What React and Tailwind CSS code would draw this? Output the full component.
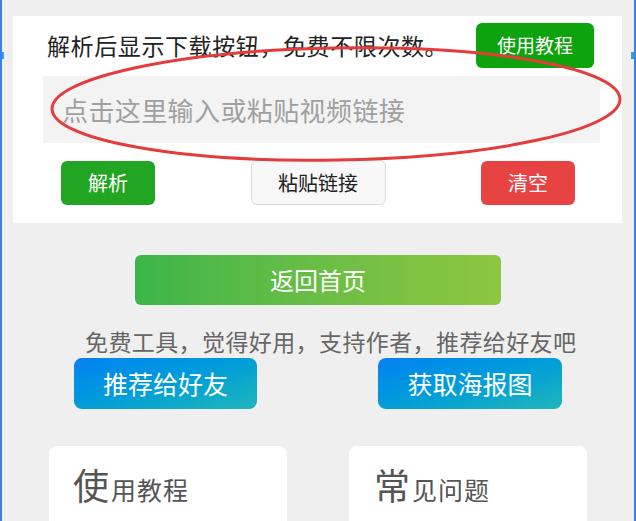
export default function App() {
  const font = { fontFamily: '"Noto Sans CJK SC", "Noto Sans", sans-serif' };
  return (
    <div
      className="relative w-[636px] h-[521px] overflow-hidden bg-[#efefef] border-x-2 border-[#3b80ea]"
      style={font}
    >
      {/* edge tabs */}
      <div className="absolute left-0 top-[52px] w-[2px] h-[7px] bg-[#36a0d8]" />
      <div className="absolute right-0 top-[52px] w-[3px] h-[7px] bg-[#36a0d8]" />

      {/* top card */}
      <div className="ml-[11px] mt-[16px] w-[609px] bg-white pt-[7px] pb-[18px]">
        <div className="flex items-center justify-between pl-[34px] pr-[28px]">
          <span className="text-[23px] text-[#222] leading-none tracking-[0.6px]">解析后显示下载按钮，免费不限次数。</span>
          <button className="w-[118px] h-[45px] rounded-[6px] bg-[#0ca30c] text-white text-[19px]">
            使用教程
          </button>
        </div>
        <div className="ml-[30px] mr-[22px] mt-[8px] h-[67px] bg-[#f3f3f3] flex items-center pl-[19px]">
          <span className="text-[26px] text-[#a0a0a0] leading-none tracking-[0.4px]">点击这里输入或粘贴视频链接</span>
        </div>
        <div className="mt-[17px] flex items-center justify-between pl-[48px] pr-[47px]">
          <button className="w-[94px] h-[44px] rounded-[6px] bg-[#22a522] text-white text-[20px]">
            解析
          </button>
          <button className="w-[135px] h-[45px] rounded-[6px] bg-[#f8f8f8] border border-[#dcdcdc] text-[#222] text-[20px]">
            粘贴链接
          </button>
          <button className="w-[94px] h-[44px] rounded-[6px] bg-[#e74343] text-white text-[20px]">
            清空
          </button>
        </div>
      </div>

      {/* home button */}
      <button className="block mx-auto mt-[32px] w-[366px] h-[50px] rounded-[6px] bg-linear-to-r from-[#3ab54a] to-[#8dc63f] text-white text-[24px]">
        返回首页
      </button>

      <div className="mt-[21px] pl-[83px] text-[23px] leading-[30px] text-[#666] tracking-[0.4px]">
        免费工具，觉得好用，支持作者，推荐给好友吧
      </div>

      <div className="mt-[2px] flex pl-[72px] gap-[121px]">
        <button className="w-[183px] h-[51px] rounded-[8px] bg-linear-to-br from-[#0a80f3] to-[#1fb6ba] text-white text-[25px]">
          推荐给好友
        </button>
        <button className="w-[184px] h-[51px] rounded-[8px] bg-linear-to-br from-[#0a80f3] to-[#1fb6ba] text-white text-[25px]">
          获取海报图
        </button>
      </div>

      <div className="mt-[37px] flex pl-[47px] gap-[62px]">
        <div className="w-[238px] h-[120px] rounded-[8px] bg-white pt-[20px] pl-[24px]">
          <div className="flex items-baseline text-[#555]">
            <span className="text-[36px] leading-none">使</span>
            <span className="ml-[2px] text-[25px] leading-none tracking-[1px]">用教程</span>
          </div>
        </div>
        <div className="w-[238px] h-[120px] rounded-[8px] bg-white pt-[20px] pl-[25px]">
          <div className="flex items-baseline text-[#555]">
            <span className="text-[36px] leading-none">常</span>
            <span className="ml-[2px] text-[25px] leading-none tracking-[1px]">见问题</span>
          </div>
        </div>
      </div>

      {/* red annotation ellipse */}
      <svg
        className="absolute left-0 top-0 pointer-events-none"
        width="636"
        height="521"
        viewBox="0 0 636 521"
      >
        <ellipse
          cx="334"
          cy="104"
          rx="284"
          ry="56"
          fill="none"
          stroke="#e43b3b"
          strokeWidth="3"
          transform="rotate(-1 334 104)"
        />
      </svg>
    </div>
  );
}
